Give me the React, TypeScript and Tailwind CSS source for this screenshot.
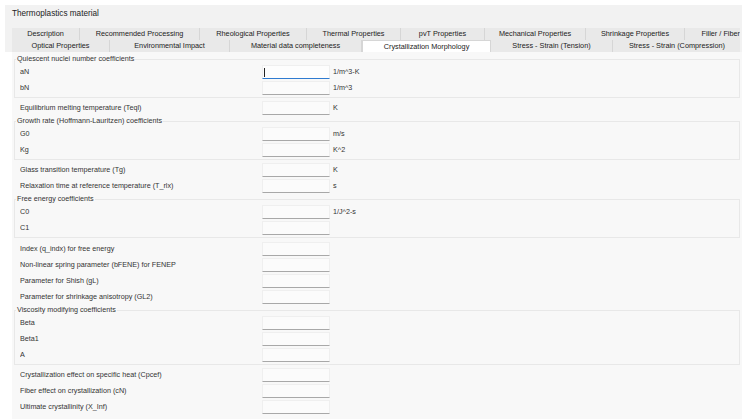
import React from 'react';

type Row = { label: string; unit?: string; focused?: boolean };
type Block = { legend?: string; pad?: string; rows: Row[] };

const tabsTop = [
  { name: 'Description', w: 68 },
  { name: 'Recommended Processing', w: 120 },
  { name: 'Rheological Properties', w: 107 },
  { name: 'Thermal Properties', w: 94 },
  { name: 'pvT Properties', w: 84 },
  { name: 'Mechanical Properties', w: 101 },
  { name: 'Shrinkage Properties', w: 99 },
  { name: 'Filler / Fiber', w: 57 },
];

const tabsBottom = [
  { name: 'Optical Properties', w: 98 },
  { name: 'Environmental Impact', w: 120 },
  { name: 'Material data completeness', w: 132 },
  { name: 'Crystallization Morphology', w: 129, active: true },
  { name: 'Stress - Strain (Tension)', w: 122 },
  { name: 'Stress - Strain (Compression)', w: 129 },
];

const blocks: Block[] = [
  {
    legend: 'Quiescent nuclei number coefficients',
    rows: [
      { label: 'aN', unit: '1/m^3-K', focused: true },
      { label: 'bN', unit: '1/m^3' },
    ],
  },
  { pad: 'pt-[2px]', rows: [{ label: 'Equilibrium melting temperature (Teql)', unit: 'K' }] },
  {
    legend: 'Growth rate (Hoffmann-Lauritzen) coefficients',
    rows: [
      { label: 'G0', unit: 'm/s' },
      { label: 'Kg', unit: 'K^2' },
    ],
  },
  {
    pad: 'pt-[2px]',
    rows: [
      { label: 'Glass transition temperature (Tg)', unit: 'K' },
      { label: 'Relaxation time at reference temperature (T_rlx)', unit: 's' },
    ],
  },
  {
    legend: 'Free energy coefficients',
    rows: [{ label: 'C0', unit: '1/J^2-s' }, { label: 'C1' }],
  },
  {
    pad: 'pt-[3px]',
    rows: [
      { label: 'Index (q_indx) for free energy' },
      { label: 'Non-linear spring parameter (bFENE) for FENEP' },
      { label: 'Parameter for Shish (gL)' },
      { label: 'Parameter for shrinkage anisotropy (GL2)' },
    ],
  },
  {
    legend: 'Viscosity modifying coefficients',
    rows: [{ label: 'Beta' }, { label: 'Beta1' }, { label: 'A' }],
  },
  {
    pad: 'pt-[2px]',
    rows: [
      { label: 'Crystallization effect on specific heat (Cpcef)' },
      { label: 'Fiber effect on crystallization (cN)' },
      { label: 'Ultimate crystallinity (X_Inf)' },
    ],
  },
];

function Field({ label, unit, focused }: Row) {
  return (
    <div className="flex h-[16px] items-center">
      <div className="w-[242px] shrink-0 truncate text-[7.2px] text-[#333]">{label}</div>
      <div
        className={
          focused
            ? 'h-[14px] w-[68px] shrink-0 border border-[#efefef] border-b-[#2f7bd0] bg-[#fdfdfd]'
            : 'h-[14px] w-[68px] shrink-0 border border-[#efefef] border-b-[#a8a8a8] bg-[#fbfbfb]'
        }
      >
        {focused && <div className="ml-[1px] mt-[2px] h-[9px] w-px bg-[#222]" />}
      </div>
      {unit && <div className="ml-[3px] text-[7.2px] text-[#333]">{unit}</div>}
    </div>
  );
}

function Section({ legend, pad, rows }: Block) {
  if (legend) {
    return (
      <fieldset className="mx-[2px] border border-[#e8e8e8] pl-[5px] pb-[1px]">
        <legend className="-ml-[4px] h-[10px] px-[1px] text-[7.2px] leading-[10px] text-[#333]">
          {legend}
        </legend>
        {rows.map((r) => (
          <Field key={r.label} {...r} />
        ))}
      </fieldset>
    );
  }
  return (
    <div className={`pl-[8px] ${pad ?? ''}`}>
      {rows.map((r) => (
        <Field key={r.label} {...r} />
      ))}
    </div>
  );
}

export default function App() {
  return (
    <div
      className="h-[419px] w-[748px] overflow-hidden bg-white pt-[5px]"
      style={{ fontFamily: '"Liberation Sans", Arial, sans-serif' }}
    >
      <div className="ml-[5px] w-[737px] bg-[#f2f2f2]">
        <div className="flex h-[18px] items-center pl-[7px] text-[8.2px] text-[#222]">
          Thermoplastics material
        </div>
        <div className="h-[5px]" />
        <div className="ml-[7px] w-[728px] overflow-hidden">
          <div className="flex h-[12px] bg-[#e9e9e9]">
            {tabsTop.map((t) => (
              <div
                key={t.name}
                style={{ width: t.w }}
                className={
                  t.name === 'Filler / Fiber'
                    ? 'shrink-0 pr-[2px] text-right text-[7.3px] leading-[12px] text-[#222]'
                    : 'shrink-0 border-r border-[#d6d6d6] text-center text-[7.3px] leading-[12px] text-[#222]'
                }
              >
                {t.name}
              </div>
            ))}
          </div>
          <div className="flex h-[12px] bg-[#e9e9e9]">
            {tabsBottom.map((t) => (
              <div
                key={t.name}
                style={{ width: t.w }}
                className={
                  t.active
                    ? 'shrink-0 border-x border-t border-[#d6d6d6] bg-white text-center text-[7.3px] leading-[11px] text-[#222]'
                    : 'shrink-0 border-r border-[#d6d6d6] text-center text-[7.3px] leading-[12px] text-[#222]'
                }
              >
                {t.name}
              </div>
            ))}
          </div>
        </div>
      </div>
      <div className="ml-[12px] w-[730px] bg-[#f8f8f8] pb-[6px] pt-[2px]">
        {blocks.map((b, i) => (
          <Section key={i} {...b} />
        ))}
      </div>
    </div>
  );
}
